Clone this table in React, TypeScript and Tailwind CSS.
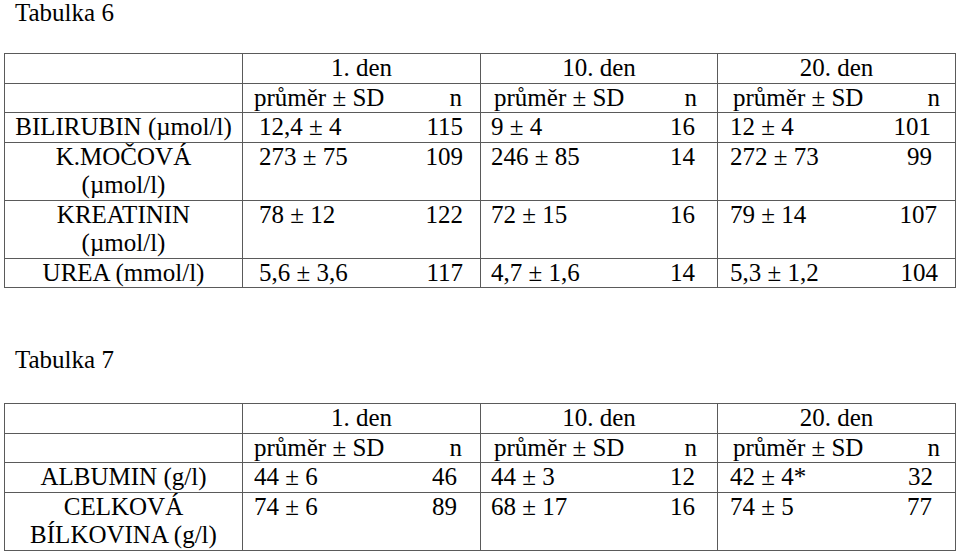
type Row = {
  label: React.ReactNode;
  cells: [string, string, string, string, string, string];
};

const b = 'border-[#5a5a5a]';

function DataTable({
  rows,
  p1,
  n1,
  n3,
}: {
  rows: Row[];
  p1: string;
  n1: string;
  n3: string[];
}) {
  return (
    <table className={`table-fixed border-collapse w-[952px] ml-[4px] border ${b}`}>
      <colgroup>
        <col className="w-[238px]" />
        <col className="w-[160px]" />
        <col className="w-[78px]" />
        <col className="w-[159px]" />
        <col className="w-[78px]" />
        <col className="w-[160px]" />
        <col className="w-[78px]" />
      </colgroup>
      <tbody>
        <tr className={`border-b ${b}`}>
          <td className={`border-r ${b}`}></td>
          <td colSpan={2} className={`text-center border-r ${b}`}>1. den</td>
          <td colSpan={2} className={`text-center border-r ${b}`}>10. den</td>
          <td colSpan={2} className="text-center">20. den</td>
        </tr>
        <tr className={`border-b ${b}`}>
          <td className={`border-r ${b}`}></td>
          <td className="pl-[11px]">průměr ± SD</td>
          <td className={`text-right pr-[18px] border-r ${b}`}>n</td>
          <td className="pl-[13px]">průměr ± SD</td>
          <td className={`text-right pr-[20px] border-r ${b}`}>n</td>
          <td className="pl-[15px]">průměr ± SD</td>
          <td className="text-right pr-[15px]">n</td>
        </tr>
        {rows.map((r, i) => (
          <tr key={i} className={`border-b ${b} align-top`}>
            <td className={`text-center border-r ${b}`}>{r.label}</td>
            <td className={p1}>{r.cells[0]}</td>
            <td className={`text-right border-r ${b} ${n1}`}>{r.cells[1]}</td>
            <td className="pl-[10px]">{r.cells[2]}</td>
            <td className={`text-right pr-[22px] border-r ${b}`}>{r.cells[3]}</td>
            <td className="pl-[12px]">{r.cells[4]}</td>
            <td className={`text-right ${n3[i]}`}>{r.cells[5]}</td>
          </tr>
        ))}
      </tbody>
    </table>
  );
}

const rows6: Row[] = [
  { label: 'BILIRUBIN (µmol/l)', cells: ['12,4 ± 4', '115', '9 ± 4', '16', '12 ± 4', '101'] },
  {
    label: (
      <>
        K.MOČOVÁ
        <br />
        (µmol/l)
      </>
    ),
    cells: ['273 ± 75', '109', '246 ± 85', '14', '272 ± 73', '99'],
  },
  {
    label: (
      <>
        KREATININ
        <br />
        (µmol/l)
      </>
    ),
    cells: ['78 ± 12', '122', '72 ± 15', '16', '79 ± 14', '107'],
  },
  { label: 'UREA (mmol/l)', cells: ['5,6 ± 3,6', '117', '4,7 ± 1,6', '14', '5,3 ± 1,2', '104'] },
];

const rows7: Row[] = [
  { label: 'ALBUMIN (g/l)', cells: ['44 ± 6', '46', '44 ± 3', '12', '42 ± 4*', '32'] },
  {
    label: (
      <>
        CELKOVÁ
        <br />
        BÍLKOVINA (g/l)
      </>
    ),
    cells: ['74 ± 6', '89', '68 ± 17', '16', '74 ± 5', '77'],
  },
];

export default function App() {
  return (
    <div className="w-[959px] h-[551px] bg-white text-black font-['Liberation_Serif',serif] text-[25px] leading-[28.5px] overflow-hidden">
      <div className="pl-[15px] leading-[25px] mb-[28px]">Tabulka 6</div>
      <DataTable
        rows={rows6}
        p1="pl-[16px]"
        n1="pr-[17px]"
        n3={['pr-[24px]', 'pr-[23px]', 'pr-[18px]', 'pr-[17px]']}
      />
      <div className="pl-[15px] leading-[25px] mt-[59px] mb-[31px]">Tabulka 7</div>
      <DataTable rows={rows7} p1="pl-[11px]" n1="pr-[23px]" n3={['pr-[22px]', 'pr-[23px]']} />
    </div>
  );
}
